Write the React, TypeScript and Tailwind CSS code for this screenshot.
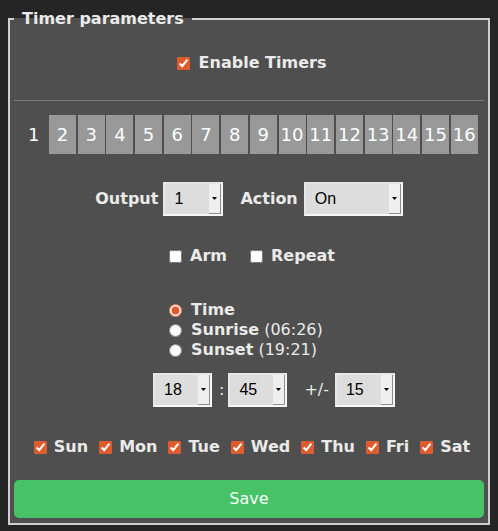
import React from 'react';

const days = ['Sun', 'Mon', 'Tue', 'Wed', 'Thu', 'Fri', 'Sat'];

interface DropProps {
  value: string;
  options: string[];
  width: string;
}

function Drop({ value, options, width }: DropProps) {
  return (
    <div className={`relative h-[34px] ${width}`}>
      <select
        defaultValue={value}
        className="appearance-none w-full h-full bg-[#dddddd] border-2 border-t-[#e6e6e6] border-l-[#e6e6e6] border-r-[#f7f7f7] border-b-[#f7f7f7] pl-[9px] text-black text-[16px] font-normal font-['Liberation_Sans',Arial,sans-serif] outline-none"
      >
        {options.map((o) => (
          <option key={o}>{o}</option>
        ))}
      </select>
      <span className="pointer-events-none absolute right-[2px] top-[2px] bottom-[2px] w-[12px] bg-[#efefef] border-r border-b border-[#8c8c8c] flex items-center justify-center">
        <svg width="5" height="3" viewBox="0 0 5 3">
          <path d="M0 0h5L2.5 3z" fill="#000" />
        </svg>
      </span>
    </div>
  );
}

function Box({ checked }: { checked?: boolean }) {
  return (
    <input
      type="checkbox"
      defaultChecked={checked}
      className="m-0 w-[13px] h-[13px] accent-[#df5a2c]"
    />
  );
}

export default function App() {
  return (
    <div className="w-[498px] h-[531px] bg-[#252525] px-2 pt-2 font-['DejaVu_Sans',sans-serif] text-[16px] text-[#eaeaea]">
      <fieldset className="border-2 border-[#cfcfcf] bg-[#4f4f4f] px-1 pb-[5px]">
        <legend className="px-2 leading-[21px] font-bold">Timer parameters</legend>

        <label className="mt-[24px] h-[20px] flex items-center justify-center pl-[5px]">
          <Box checked />
          <span className="ml-[9px] font-bold">Enable Timers</span>
        </label>

        <hr className="mt-[27px] border-0 border-t border-[#7e7e7e]" />

        <div className="mt-[14px] flex justify-center gap-[1.7px]">
          {Array.from({ length: 16 }, (_, i) => i + 1).map((n) => (
            <div
              key={n}
              className={`w-[27px] h-[39px] flex items-center justify-center text-[18px] text-[#faffff] ${n === 1 ? '' : 'bg-[#999999]'}`}
            >
              {n}
            </div>
          ))}
        </div>

        <div className="mt-[28px] flex items-center justify-center font-bold">
          <span>Output</span>
          <div className="ml-[5px]">
            <Drop value="1" options={['1']} width="w-[60px]" />
          </div>
          <span className="ml-[17px]">Action</span>
          <div className="ml-[6px]">
            <Drop value="On" options={['Off', 'On', 'Toggle', 'Blink']} width="w-[99px]" />
          </div>
        </div>

        <div className="mt-[30px] h-[20px] flex items-center justify-center pl-[6px] font-bold">
          <label className="flex items-center">
            <Box />
            <span className="ml-[8px]">Arm</span>
          </label>
          <label className="ml-[23px] flex items-center">
            <Box />
            <span className="ml-[8px]">Repeat</span>
          </label>
        </div>

        <div className="mt-[34px] flex flex-col pl-[155px] leading-[20px]">
          {[
            ['Time', ''],
            ['Sunrise', ' (06:26)'],
            ['Sunset', ' (19:21)'],
          ].map(([name, at], i) => (
            <label key={name} className="h-[20px] flex items-center">
              <input
                type="radio"
                name="mode"
                defaultChecked={i === 0}
                className="m-0 w-[13px] h-[13px] accent-[#df5a2c]"
              />
              <span className="ml-[9px] font-bold">{name}</span>
              <span className="whitespace-pre">{at}</span>
            </label>
          ))}
        </div>

        <div className="mt-[13px] flex items-center pl-[139px]">
          <Drop value="18" options={['18']} width="w-[59px]" />
          <span className="ml-[7px] mr-[4px]">:</span>
          <Drop value="45" options={['45']} width="w-[59px]" />
          <span className="ml-[17px] mr-[6px]">+/-</span>
          <Drop value="15" options={['15']} width="w-[60px]" />
        </div>

        <div className="mt-[30px] h-[20px] flex items-center justify-center gap-[11px] pl-[6px] font-bold">
          {days.map((d) => (
            <label key={d} className="flex items-center">
              <Box checked />
              <span className="ml-[7px]">{d}</span>
            </label>
          ))}
        </div>

        <button className="mt-[23px] w-full h-[38px] rounded-[5px] bg-[#47c266] text-[#faffff] text-[16px] font-normal">
          Save
        </button>
      </fieldset>
    </div>
  );
}
